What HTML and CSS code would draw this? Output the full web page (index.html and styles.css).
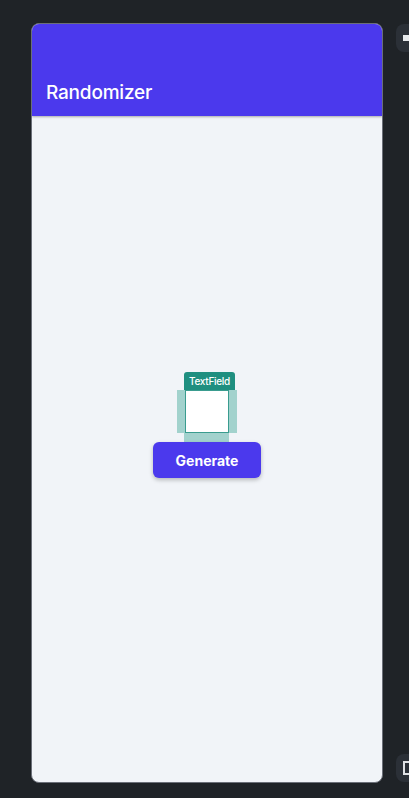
FILE: index.html
```html
<!DOCTYPE html>
<html lang="en">
<head>
  <meta charset="UTF-8" />
  <meta name="viewport" content="width=device-width, initial-scale=1.0"/>
  <title>Randomizer</title>
  <link rel="stylesheet" href="styles.css">
</head>
<body>
  <div class="stage">
    <div class="device">
      <header class="app-bar">
        <h1>Randomizer</h1>
      </header>
      <main class="content">
        <div class="field-wrap">
          <span class="field-tag">TextField</span>
          <div class="field-row">
            <span class="pad pad-side"></span>
            <div class="field-box"></div>
            <span class="pad pad-side"></span>
          </div>
          <span class="pad pad-bottom"></span>
        </div>
        <button class="generate">Generate</button>
      </main>
    </div>
    <div class="side-tools">
      <div class="tool"><span class="tool-glyph"></span></div>
      <div class="tool"><span class="tool-glyph square"></span></div>
    </div>
  </div>
</body>
</html>
```

FILE: styles.css
```css
html, body {
  margin: 0;
  padding: 0;
  background-color: #1f2327;
  font-family: 'Inter', 'Noto Sans', sans-serif;
  height: 100vh;
  width: 100vw;
  overflow: hidden;
}

.stage {
  display: flex;
  width: 409px;
  box-sizing: border-box;
  overflow: hidden;
  padding: 23px 0 0 31px;
  gap: 13px;
}

.device {
  flex-shrink: 0;
  width: 350px;
  height: 758px;
  border: 1px solid #6b6f78;
  border-radius: 8px;
  overflow: hidden;
  background: #f1f4f8;
  display: flex;
  flex-direction: column;
}

.app-bar {
  height: 92px;
  background: #4b39ed;
  display: flex;
  align-items: flex-end;
  box-shadow: 0 1px 2px rgba(0, 0, 0, 0.3);
  position: relative;
  z-index: 1;
}

.app-bar h1 {
  margin: 0 0 12px 14px;
  color: white;
  font-size: 19px;
  font-weight: 500;
  letter-spacing: -0.2px;
}

.content {
  flex: 1;
  display: flex;
  flex-direction: column;
  align-items: center;
  padding-top: 256px;
}

.field-wrap {
  display: flex;
  flex-direction: column;
  align-items: flex-start;
}

.field-tag {
  margin-left: 7px;
  width: 51px;
  height: 18px;
  background: #1f8f80;
  color: white;
  font-size: 10px;
  font-weight: 500;
  line-height: 18px;
  text-align: center;
  border-radius: 3px 3px 0 0;
  letter-spacing: -0.3px;
}

.field-row {
  display: flex;
}

.pad {
  background: #a2d2cd;
}

.pad-side {
  width: 8px;
  height: 43px;
}

.field-box {
  width: 42px;
  height: 41px;
  border: 1px solid #3a9c8f;
  background: white;
}

.pad-bottom {
  margin-left: 7px;
  width: 45px;
  height: 9px;
}

.generate {
  width: 108px;
  height: 36px;
  border: none;
  border-radius: 6px;
  background: #4b39ed;
  color: white;
  font-family: inherit;
  font-size: 14px;
  font-weight: 700;
  box-shadow: 0 2px 4px rgba(0, 0, 0, 0.25);
}

.side-tools {
  flex-shrink: 0;
  display: flex;
  flex-direction: column;
  justify-content: space-between;
  height: 758px;
  padding-top: 1px;
}

.tool {
  width: 28px;
  height: 28px;
  border-radius: 8px;
  background: #2b3037;
  display: flex;
  align-items: center;
  padding-left: 7px;
}

.tool-glyph {
  width: 6px;
  height: 4px;
  border: 1px solid #e6e8ea;
  border-right: none;
  background: #e6e8ea;
}

.tool-glyph.square {
  width: 8px;
  height: 10px;
  background: none;
  border: 2px solid #dfe1e4;
  border-right: none;
}
```
